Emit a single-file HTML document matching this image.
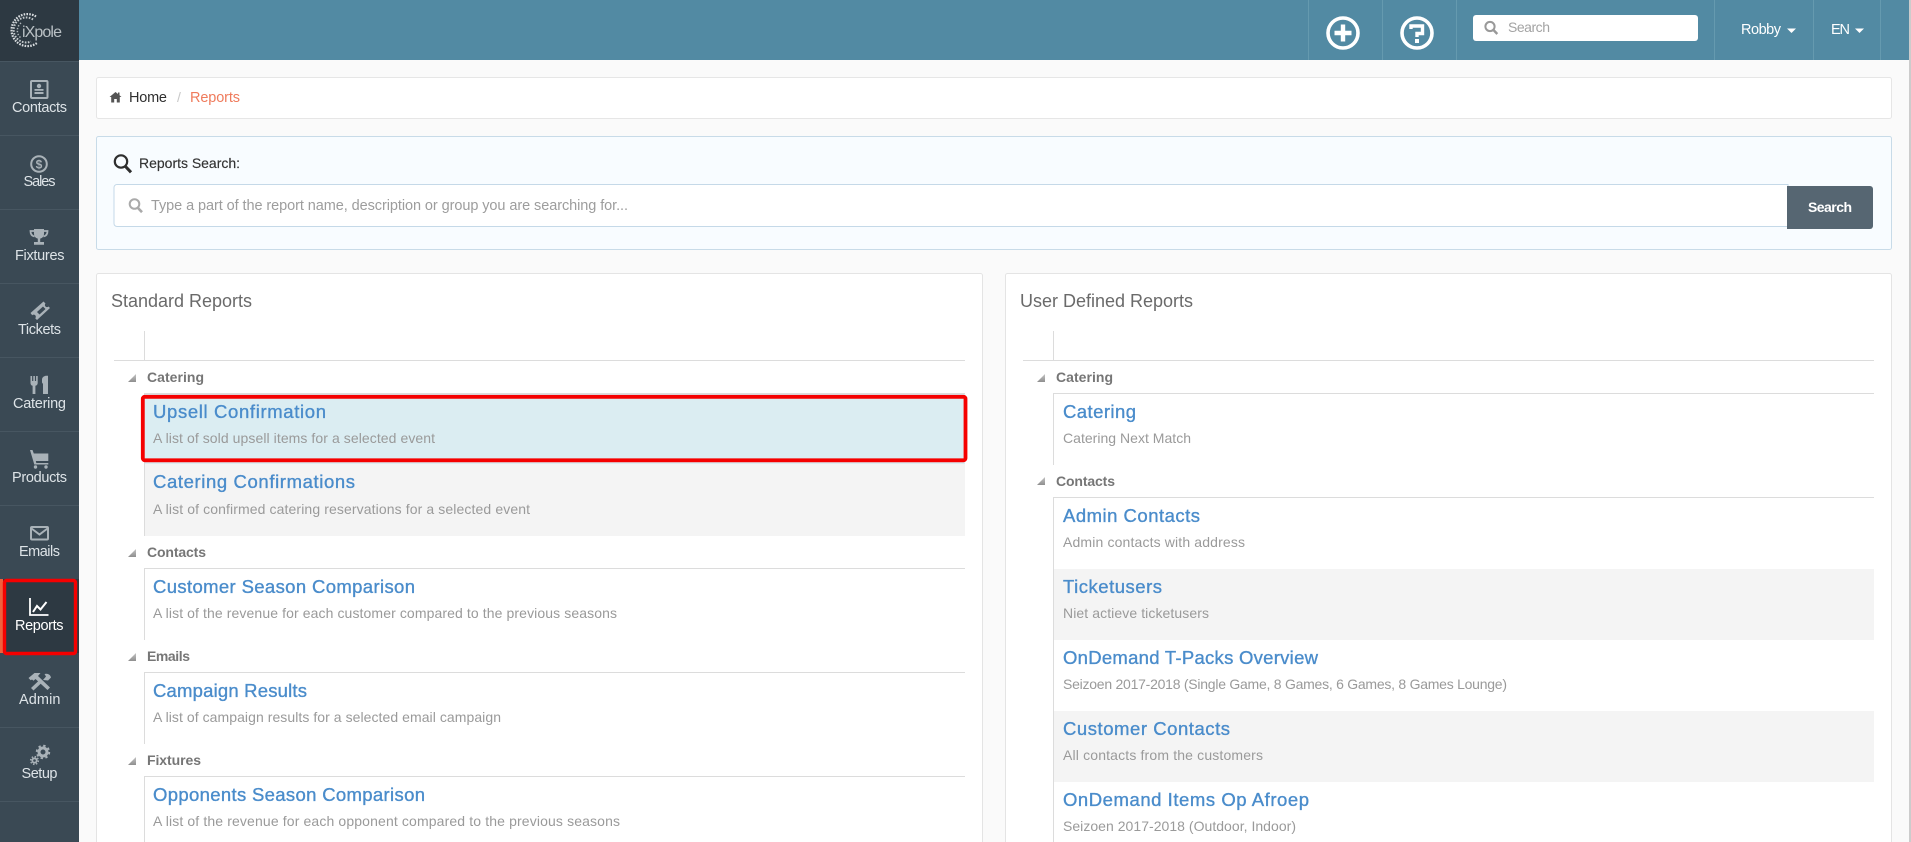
<!DOCTYPE html>
<html lang="en">
<head>
<meta charset="utf-8">
<title>Reports</title>
<style>
html,body{margin:0;padding:0;width:1911px;height:842px;overflow:hidden;background:#fafafa}
svg{display:block}
text{font-family:"Liberation Sans",sans-serif}
.nav{font-size:14.5px;fill:#dde3e7;text-anchor:start}
.ic{fill:#a9b2b8}
.ics{fill:none;stroke:#a9b2b8}
.ttl{font-size:18.5px;fill:#4a8ccb;stroke:#4a8ccb;stroke-width:.35}
.dsc{font-size:14px;fill:#9a9a9a}
.grp{font-size:14px;font-weight:bold;fill:#767676}
.hd{font-size:18px;fill:#6a6a6a}
.ln{fill:#dcdcdc}
</style>
</head>
<body>
<svg width="1911" height="842" viewBox="0 0 1911 842" xmlns="http://www.w3.org/2000/svg">
<defs>
<linearGradient id="tri" x1="0" y1="0" x2="0" y2="1"><stop offset="0" stop-color="#c4c4c4"/><stop offset="1" stop-color="#8f8f8f"/></linearGradient>
</defs>
<rect width="1911" height="842" fill="#fafafa"/>
<rect x="1909" y="0" width="2" height="842" fill="#cccccc"/>

<!-- top bar -->
<rect x="79" y="0" width="1830" height="60" fill="#528aa3"/>
<g fill="#659aaf">
<rect x="1308" y="0" width="1" height="60"/><rect x="1382" y="0" width="1" height="60"/><rect x="1456" y="0" width="1" height="60"/><rect x="1714" y="0" width="1" height="60"/><rect x="1813" y="0" width="1" height="60"/><rect x="1880" y="0" width="1" height="60"/>
</g>
<circle cx="1343" cy="33" r="15" fill="none" stroke="#fff" stroke-width="3.6"/>
<path d="M1343 24.500v17M1334.500 33h17" stroke="#fff" stroke-width="4.400" fill="none"/>
<circle cx="1417" cy="33" r="15" fill="none" stroke="#fff" stroke-width="3.6"/>
<path d="M1411 29v-3h11.500v7.500h-5.500v3.500" stroke="#fff" stroke-width="3.400" fill="none"/>
<rect x="1415" y="39" width="4" height="4" fill="#fff"/>
<rect x="1473" y="15" width="225" height="26" rx="3" fill="#fff"/>
<circle cx="1490" cy="26.500" r="4.600" fill="none" stroke="#999" stroke-width="2"/>
<path d="M1493.500 30l3.800 4" stroke="#999" stroke-width="2.400" fill="none"/>
<text x="1508" y="32" font-size="14" fill="#a3a3a3" textLength="42">Search</text>
<text x="1741" y="34" font-size="14.500" fill="#fff" textLength="40">Robby</text>
<path d="M1787 28.500h9l-4.500 4.500z" fill="#fff"/>
<text x="1831" y="34" font-size="14.500" fill="#fff" textLength="19">EN</text>
<path d="M1855 28.500h9l-4.500 4.500z" fill="#fff"/>

<!-- sidebar -->
<rect x="0" y="0" width="79" height="842" fill="#3a4954"/>
<rect x="0" y="0" width="79" height="61" fill="#2d3942"/>
<g fill="#475661">
<rect y="61" width="79" height="1"/><rect y="135" width="79" height="1"/><rect y="209" width="79" height="1"/><rect y="283" width="79" height="1"/><rect y="357" width="79" height="1"/><rect y="431" width="79" height="1"/><rect y="505" width="79" height="1"/><rect y="727" width="79" height="1"/><rect y="801" width="79" height="1"/>
</g>
<!-- logo -->
<g fill="none">
<path d="M36 16.500A16 16 0 1 0 37 43" stroke="#d8dcdf" stroke-width="2.200" stroke-dasharray="1.600 1.200"/>
<path d="M33 19.500A12.500 12.500 0 1 0 31 41.500" stroke="#c4cacd" stroke-width="2" stroke-dasharray="1.600 1.400"/>
<path d="M21 23A9.500 9.500 0 0 0 21 38" stroke="#aeb5b9" stroke-width="1.500" stroke-dasharray="1.400 1.600"/>
</g>
<text x="22" y="37" font-size="16" fill="#b9c0c4" textLength="40">iXpole</text>

<!-- contacts icon -->
<rect x="31" y="81" width="16.500" height="17" rx="1" class="ics" stroke-width="2"/>
<circle cx="39" cy="86" r="2.200" class="ic"/><rect x="34.500" y="89" width="9" height="1.800" class="ic"/><rect x="34.500" y="92" width="9" height="2" class="ic"/>
<text x="12" y="112" class="nav" textLength="55">Contacts</text>
<!-- sales -->
<circle cx="39" cy="164" r="7.800" class="ics" stroke-width="2"/>
<text x="39" y="168.500" font-size="12" font-weight="bold" fill="#a9b2b8" text-anchor="middle">$</text>
<text x="23.500" y="186" class="nav" textLength="32">Sales</text>
<!-- fixtures -->
<path d="M34 229h10v5a5 5 0 0 1-3.800 4.600v3.400h3.800v2.800h-10v-2.800h3.800v-3.400a5 5 0 0 1-3.800-4.600z" class="ic"/>
<path d="M34 231h-3.500c0 3.500 1.500 5 4 5.500M44 231h3.500c0 3.500-1.500 5-4 5.500" class="ics" stroke-width="1.800"/>
<text x="15" y="260" class="nav" textLength="49.500">Fixtures</text>
<!-- tickets -->
<path d="M30.500 313l13-11.500 2 2a2 2 0 0 0 3 3l1.500 1.500-13 12-1.800-1.800a2 2 0 0 0-3-3z" class="ic"/>
<path d="M37 312l6-5.500 2.500 2.500-6 5.500z" fill="#3a4954"/>
<text x="18" y="334" class="nav" textLength="43">Tickets</text>
<!-- catering -->
<path d="M30.500 376h1.600v5h1.200v-5h1.600v5h1.200v-5h1.600v7c0 1.500-1 2.500-2.300 2.800v8.200h-2.800v-8.200c-1.300-.3-2.100-1.300-2.100-2.800z" class="ic"/>
<path d="M43 394v-10l-1-1.500v-3c0-2 1.800-3.500 4-3.800h2v18.300z" class="ic"/>
<text x="13" y="408" class="nav" textLength="53">Catering</text>
<!-- products -->
<path d="M30 450h2.500l1.300 3.500h14.500v7.500h-12.500l.5 2h12v1.500h-14z" class="ic"/>
<circle cx="35.500" cy="467" r="1.700" class="ic"/><circle cx="46" cy="467" r="1.700" class="ic"/>
<text x="12" y="482" class="nav" textLength="55">Products</text>
<!-- emails -->
<rect x="31" y="527" width="17" height="12.500" rx="1" class="ics" stroke-width="2"/>
<path d="M31.500 528.500l8 6 8-6" class="ics" stroke-width="2"/>
<text x="19" y="556" class="nav" textLength="41">Emails</text>
<!-- reports active -->
<rect x="0" y="579" width="79" height="74" fill="#2d3942"/>
<rect x="0" y="579" width="3" height="74" fill="#f0603c"/>
<path d="M30 598v17h18.500" fill="none" stroke="#fff" stroke-width="1.800"/>
<path d="M33 612l4-6 3.500 3.500 6-7.500" fill="none" stroke="#fff" stroke-width="2"/>
<text x="15" y="630" class="nav" textLength="48.500" style="fill:#fff">Reports</text>
<rect x="4.500" y="580.500" width="71" height="73" rx="2" fill="none" stroke="#f50000" stroke-width="3.400"/>
<!-- admin -->
<path d="M28.500 678l6-5h6l-2.500 3 12 11.500-2.500 2.500-12-11-2 1.800-1.500-1.300-1.300.8z" class="ic"/>
<path d="M31 688l8.500-8 2.500 2.500-8.500 8z" class="ic"/>
<path d="M43 680l3-3.500-1.500-2.500c2.800-1 6 .5 6.500 3.500l-3 3z" class="ic"/>
<text x="19" y="704" class="nav" textLength="41.500">Admin</text>
<!-- setup -->
<circle cx="43" cy="752" r="4" class="ics" stroke-width="3"/>
<circle cx="43" cy="752" r="6.300" fill="none" stroke="#a9b2b8" stroke-width="1.800" stroke-dasharray="2.400 2.550"/>
<circle cx="34.500" cy="760.500" r="2.200" class="ics" stroke-width="1.800"/>
<circle cx="34.500" cy="760.500" r="3.900" fill="none" stroke="#a9b2b8" stroke-width="1.400" stroke-dasharray="1.500 1.560"/>
<text x="21.500" y="778" class="nav" textLength="36">Setup</text>

<!-- breadcrumb -->
<rect x="96.500" y="77.500" width="1795" height="41" rx="2" fill="#fff" stroke="#e6e6e6"/>
<path d="M115.500 92l2.500 2v-1.500h1.500v2.800l2 1.700h-1.700v5.500h-3v-3.500h-2.600v3.500h-3v-5.500h-1.700z" fill="#555"/>
<text x="129" y="102" font-size="14.500" fill="#2f2f2f" textLength="38">Home</text>
<text x="177" y="102" font-size="14" fill="#c8c8c8">/</text>
<text x="190" y="102" font-size="14.500" fill="#ef7b5c" textLength="50">Reports</text>

<!-- search card -->
<rect x="96.500" y="136.500" width="1795" height="113" rx="2" fill="#f8fcff" stroke="#c8dbe8"/>
<circle cx="121" cy="161.500" r="6.200" fill="none" stroke="#2e2e2e" stroke-width="2.200"/>
<path d="M125.500 166.500l5.500 5.800" stroke="#2e2e2e" stroke-width="3" fill="none"/>
<text x="139" y="168" font-size="14" fill="#333" stroke="#333" stroke-width=".15" textLength="101">Reports Search:</text>
<path d="M1788 184.500H117a3 3 0 0 0-3 3v36a3 3 0 0 0 3 3H1788z" fill="#fff" stroke="#c5d9e8"/>
<circle cx="134.500" cy="204" r="4.800" fill="none" stroke="#aaa" stroke-width="2"/>
<path d="M138 208l4 4.200" stroke="#aaa" stroke-width="2.600" fill="none"/>
<text x="151" y="210" font-size="14.500" fill="#9d9d9d" textLength="477">Type a part of the report name, description or group you are searching for...</text>
<path d="M1787 186h83a3 3 0 0 1 3 3v37a3 3 0 0 1-3 3h-83z" fill="#566672"/>
<text x="1808" y="212" font-size="14" font-weight="bold" fill="#fff" textLength="44">Search</text>

<!-- left panel -->
<rect x="96.500" y="273.500" width="886" height="600" rx="2" fill="#fff" stroke="#e4e4e4"/>
<text x="111" y="307" class="hd" textLength="141">Standard Reports</text>
<rect x="144" y="331" width="1" height="29" class="ln"/>
<rect x="114" y="360" width="851" height="1" class="ln"/>

<path d="M136 374v8h-8z" fill="url(#tri)"/>
<text x="147" y="382" class="grp" textLength="57">Catering</text>
<rect x="145" y="393" width="820" height="71" fill="#dbedf2"/>
<rect x="144" y="393" width="821" height="1" class="ln"/>
<rect x="144" y="393" width="1" height="143" class="ln"/>
<text x="153" y="418" class="ttl" textLength="173">Upsell Confirmation</text>
<text x="153" y="443" class="dsc" textLength="282">A list of sold upsell items for a selected event</text>
<rect x="145" y="464" width="820" height="72" fill="#f4f4f4"/>
<text x="153" y="488" class="ttl" textLength="202">Catering Confirmations</text>
<text x="153" y="514" class="dsc" textLength="377">A list of confirmed catering reservations for a selected event</text>
<rect x="142.800" y="396.800" width="822.700" height="63.500" rx="2" fill="none" stroke="#f50000" stroke-width="3.800"/>

<path d="M136 549v8h-8z" fill="url(#tri)"/>
<text x="147" y="557" class="grp" textLength="59">Contacts</text>
<rect x="144" y="568" width="821" height="1" class="ln"/>
<rect x="144" y="568" width="1" height="72" class="ln"/>
<text x="153" y="593" class="ttl" textLength="262">Customer Season Comparison</text>
<text x="153" y="618" class="dsc" textLength="464">A list of the revenue for each customer compared to the previous seasons</text>

<path d="M136 653v8h-8z" fill="url(#tri)"/>
<text x="147" y="661" class="grp" textLength="43">Emails</text>
<rect x="144" y="672" width="821" height="1" class="ln"/>
<rect x="144" y="672" width="1" height="72" class="ln"/>
<text x="153" y="697" class="ttl" textLength="154">Campaign Results</text>
<text x="153" y="722" class="dsc" textLength="348">A list of campaign results for a selected email campaign</text>

<path d="M136 757v8h-8z" fill="url(#tri)"/>
<text x="147" y="765" class="grp" textLength="54">Fixtures</text>
<rect x="144" y="776" width="821" height="1" class="ln"/>
<rect x="144" y="776" width="1" height="66" class="ln"/>
<text x="153" y="801" class="ttl" textLength="272">Opponents Season Comparison</text>
<text x="153" y="826" class="dsc" textLength="467">A list of the revenue for each opponent compared to the previous seasons</text>

<!-- right panel -->
<rect x="1005.500" y="273.500" width="886" height="600" rx="2" fill="#fff" stroke="#e4e4e4"/>
<text x="1020" y="307" class="hd" textLength="173">User Defined Reports</text>
<rect x="1053" y="331" width="1" height="29" class="ln"/>
<rect x="1023" y="360" width="851" height="1" class="ln"/>

<path d="M1045 374v8h-8z" fill="url(#tri)"/>
<text x="1056" y="382" class="grp" textLength="57">Catering</text>
<rect x="1053" y="393" width="821" height="1" class="ln"/>
<rect x="1053" y="393" width="1" height="72" class="ln"/>
<text x="1063" y="418" class="ttl" textLength="73">Catering</text>
<text x="1063" y="443" class="dsc" textLength="128">Catering Next Match</text>

<path d="M1045 477v8h-8z" fill="url(#tri)"/>
<text x="1056" y="486" class="grp" textLength="59">Contacts</text>
<rect x="1053" y="497" width="821" height="1" class="ln"/>
<rect x="1054" y="569" width="820" height="71" fill="#f4f4f4"/>
<rect x="1054" y="711" width="820" height="71" fill="#f4f4f4"/>
<rect x="1053" y="497" width="1" height="345" class="ln"/>
<text x="1063" y="522" class="ttl" textLength="137">Admin Contacts</text>
<text x="1063" y="547" class="dsc" textLength="182">Admin contacts with address</text>
<text x="1063" y="593" class="ttl" textLength="99">Ticketusers</text>
<text x="1063" y="618" class="dsc" textLength="146">Niet actieve ticketusers</text>
<text x="1063" y="664" class="ttl" textLength="255">OnDemand T-Packs Overview</text>
<text x="1063" y="689" class="dsc" textLength="444">Seizoen 2017-2018 (Single Game, 8 Games, 6 Games, 8 Games Lounge)</text>
<text x="1063" y="735" class="ttl" textLength="167">Customer Contacts</text>
<text x="1063" y="760" class="dsc" textLength="200">All contacts from the customers</text>
<text x="1063" y="806" class="ttl" textLength="246">OnDemand Items Op Afroep</text>
<text x="1063" y="831" class="dsc" textLength="233">Seizoen 2017-2018 (Outdoor, Indoor)</text>
</svg>
</body>
</html>
